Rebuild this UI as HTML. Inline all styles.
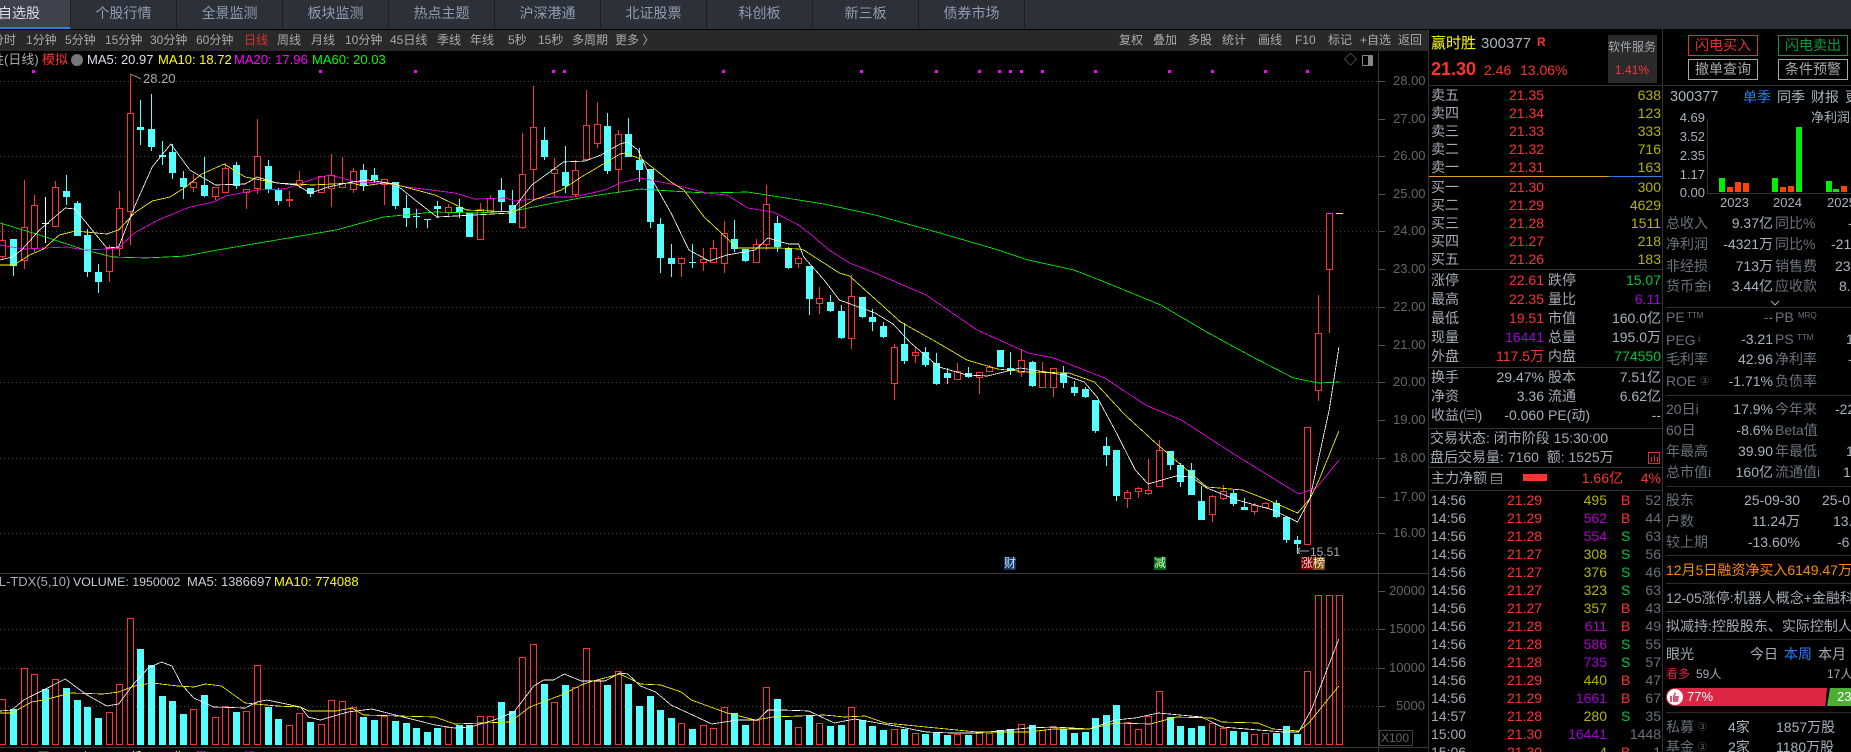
<!DOCTYPE html>
<html lang="zh"><head><meta charset="utf-8"><title>赢时胜</title>
<style>
*{margin:0;padding:0;box-sizing:border-box}
html,body{width:1851px;height:752px;background:#000;overflow:hidden}
body{position:relative;font-family:"Liberation Sans","Noto Sans CJK SC",sans-serif;font-size:14px;color:#aab4c0}
.t{position:absolute;white-space:nowrap;line-height:18px}
.b{position:absolute;background:#2c2c2c}
#top{position:absolute;left:0;top:0;width:1851px;height:29px;background:#2c3039}
.tab{position:absolute;top:0;height:29px;line-height:27px;text-align:center;color:#8f9db0;border-right:1px solid #1c1e24}
#bar{position:absolute;left:0;top:30px;width:1428px;height:21px;background:#292929}
#bar span{position:absolute;top:0;line-height:21px;font-size:12px;color:#aaa;white-space:nowrap}
.ax{position:absolute;left:1393px;font-size:13px;line-height:16px;color:#666}
.s{font-size:13px}.x{font-size:12px}
.r{color:#ff3232}.g{color:#00c83c}.o{color:#b4b400}.p{color:#b400c8}.v{color:#a000d8}.w{color:#a8b2be}.l{color:#a4acb6}.d{color:#6a727c}.bl{color:#2a7df0}
.sm{font-size:8px;position:absolute;color:#6a727c;white-space:nowrap;line-height:10px}
svg{position:absolute;left:0;top:0}
</style></head><body>
<div id="top">
<div class="tab" style="left:0;width:71px;background:#3d424d;color:#d8dde6;text-align:left;text-indent:-2px;border-bottom:2px solid #2a7de1;height:29px">自选股</div>
<div class="tab" style="left:71px;width:106px">个股行情</div>
<div class="tab" style="left:177px;width:106px">全景监测</div>
<div class="tab" style="left:283px;width:106px">板块监测</div>
<div class="tab" style="left:389px;width:106px">热点主题</div>
<div class="tab" style="left:495px;width:106px">沪深港通</div>
<div class="tab" style="left:601px;width:106px">北证股票</div>
<div class="tab" style="left:707px;width:106px">科创板</div>
<div class="tab" style="left:813px;width:106px">新三板</div>
<div class="tab" style="left:919px;width:106px">债券市场</div>
</div>
<div id="bar">
<span style="left:-8px">分时</span><span style="left:26px">1分钟</span><span style="left:65px">5分钟</span><span style="left:105px">15分钟</span><span style="left:150px">30分钟</span><span style="left:196px">60分钟</span><span style="left:244px;color:#e03030">日线</span><span style="left:277px">周线</span><span style="left:311px">月线</span><span style="left:345px">10分钟</span><span style="left:390px">45日线</span><span style="left:437px">季线</span><span style="left:470px">年线</span><span style="left:508px">5秒</span><span style="left:538px">15秒</span><span style="left:572px">多周期</span><span style="left:615px">更多 〉</span>
<span style="left:1119px">复权</span><span style="left:1153px">叠加</span><span style="left:1188px">多股</span><span style="left:1222px">统计</span><span style="left:1258px">画线</span><span style="left:1295px">F10</span><span style="left:1328px">标记</span><span style="left:1360px">+自选</span><span style="left:1398px">返回</span>
</div>

<svg id="c" width="1851" height="752"></svg>

<div class="t s" style="left:-9px;top:51px;color:#aaa">胜(日线)</div>
<div class="t s r" style="left:42px;top:51px">模拟</div>
<div style="position:absolute;left:71px;top:54px;width:12px;height:12px;border-radius:6px;background:#777"></div>
<div class="t s" style="left:87px;top:51px;color:#dde">MA5: 20.97</div>
<div class="t s" style="left:158px;top:51px;color:#ff0">MA10: 18.72</div>
<div class="t s" style="left:234px;top:51px;color:#f0f">MA20: 17.96</div>
<div class="t s" style="left:312px;top:51px;color:#0f0">MA60: 20.03</div>
<div class="t s" style="left:143px;top:70px;color:#aaa">28.20</div>
<div class="t x" style="left:1310px;top:543px;color:#aaa">15.51</div>
<div class="t s" style="left:1344px;top:51px;color:#888">◇</div>
<div class="t x" style="left:1004px;top:557px;width:12px;height:13px;line-height:13px;background:#0f3a66;color:#cde">财</div>
<div class="t x" style="left:1154px;top:557px;width:12px;height:13px;line-height:13px;background:#0a6a10;color:#cfc">减</div>
<div class="t x" style="left:1301px;top:557px;width:12px;height:13px;line-height:13px;background:#700;color:#fcc">涨</div>
<div class="t x" style="left:1313px;top:557px;width:12px;height:13px;line-height:13px;background:#7a4a10;color:#fec">榜</div>
<div class="t s" style="left:-20px;top:573px;color:#aab">VOL-TDX(5,10)</div>
<div class="t" style="left:73px;top:573px;font-size:12.4px;color:#c8d0d8">VOLUME: 1950002</div>
<div class="t s" style="left:187px;top:573px;color:#c8d0d8">MA5: 1386697</div>
<div class="t s" style="left:274px;top:573px;color:#ff0">MA10: 774088</div>
<div class="t x" style="left:4px;top:748px;color:#aaa">12/09 开:9.97 高:9.98</div>
<div class="t x" style="left:130px;top:748px;color:#ff0">低:9.21 收:9.93</div>
<div class="t x" style="left:195px;top:748px;color:#f0f">量:11.87 额:9.09</div>

<div class="ax" style="top:73px">28.00</div><div class="ax" style="top:111px">27.00</div><div class="ax" style="top:148px">26.00</div><div class="ax" style="top:186px">25.00</div><div class="ax" style="top:223px">24.00</div><div class="ax" style="top:261px">23.00</div><div class="ax" style="top:299px">22.00</div><div class="ax" style="top:337px">21.00</div><div class="ax" style="top:374px">20.00</div><div class="ax" style="top:412px">19.00</div><div class="ax" style="top:450px">18.00</div><div class="ax" style="top:489px">17.00</div><div class="ax" style="top:525px">16.00</div>
<div class="ax" style="top:583px;left:1389px">20000</div><div class="ax" style="top:621px;left:1389px">15000</div><div class="ax" style="top:660px;left:1389px">10000</div><div class="ax" style="top:698px;left:1396px">5000</div>
<div class="ax" style="top:730px;left:1379px;width:34px;height:16px;border:1px solid #444;line-height:14px;font-size:12px;padding-left:1px">X100</div>

<div class="b" style="left:0;top:573px;width:1428px;height:1px;background:#3a3a3a"></div>
<div class="b" style="left:0;top:747px;width:1428px;height:1px;background:#3a3a3a"></div>
<div class="b" style="left:1378px;top:51px;width:1px;height:701px;background:#3a3a3a"></div>
<div class="b" style="left:1428px;top:29px;width:1px;height:723px;background:#333"></div>
<div class="b" style="left:1662px;top:29px;width:1px;height:723px;background:#333"></div>

<!-- Column 1 -->
<div class="t" style="left:1431px;top:35px;font-size:15px;color:#ff0">赢时胜</div>
<div class="t" style="left:1481px;top:35px;font-size:15px;color:#aab4c0">300377</div>
<div class="t x r" style="left:1537px;top:33px;font-weight:bold">R</div>
<div class="t r" style="left:1431px;top:60px;font-size:18px;font-weight:bold">21.30</div>
<div class="t r" style="left:1484px;top:61px">2.46</div>
<div class="t r" style="left:1520px;top:61px">13.06%</div>
<div class="b" style="left:1608px;top:35px;width:49px;height:48px;background:#2a2a2a"></div>
<div class="t x" style="left:1608px;top:38px;color:#a0a8b0">软件服务</div>
<div class="t x r" style="left:1615px;top:61px">1.41%</div>
<div class="b" style="left:1429px;top:85px;width:233px;height:1px;background:#333"></div>

<div class="t l" style="left:1431px;top:86px">卖五</div><div class="t r" style="left:1509px;top:86px">21.35</div><div class="t o" style="right:190px;top:86px">638</div>
<div class="t l" style="left:1431px;top:104px">卖四</div><div class="t r" style="left:1509px;top:104px">21.34</div><div class="t o" style="right:190px;top:104px">123</div>
<div class="t l" style="left:1431px;top:122px">卖三</div><div class="t r" style="left:1509px;top:122px">21.33</div><div class="t o" style="right:190px;top:122px">333</div>
<div class="t l" style="left:1431px;top:140px">卖二</div><div class="t r" style="left:1509px;top:140px">21.32</div><div class="t o" style="right:190px;top:140px">716</div>
<div class="t l" style="left:1431px;top:158px">卖一</div><div class="t r" style="left:1509px;top:158px">21.31</div><div class="t o" style="right:190px;top:158px">163</div>
<div class="b" style="left:1429px;top:176px;width:180px;height:1px;background:#e09a20"></div>
<div class="b" style="left:1609px;top:176px;width:53px;height:1px;background:#2a7de1"></div>
<div class="t l" style="left:1431px;top:178px">买一</div><div class="t r" style="left:1509px;top:178px">21.30</div><div class="t o" style="right:190px;top:178px">300</div>
<div class="t l" style="left:1431px;top:196px">买二</div><div class="t r" style="left:1509px;top:196px">21.29</div><div class="t o" style="right:190px;top:196px">4629</div>
<div class="t l" style="left:1431px;top:214px">买三</div><div class="t r" style="left:1509px;top:214px">21.28</div><div class="t o" style="right:190px;top:214px">1511</div>
<div class="t l" style="left:1431px;top:232px">买四</div><div class="t r" style="left:1509px;top:232px">21.27</div><div class="t o" style="right:190px;top:232px">218</div>
<div class="t l" style="left:1431px;top:250px">买五</div><div class="t r" style="left:1509px;top:250px">21.26</div><div class="t o" style="right:190px;top:250px">183</div>
<div class="b" style="left:1429px;top:269px;width:233px;height:1px;background:#333"></div>

<div class="t l" style="left:1431px;top:271px">涨停</div><div class="t r" style="right:307px;top:271px">22.61</div><div class="t l" style="left:1548px;top:271px">跌停</div><div class="t g" style="right:190px;top:271px">15.07</div>
<div class="t l" style="left:1431px;top:290px">最高</div><div class="t r" style="right:307px;top:290px">22.35</div><div class="t l" style="left:1548px;top:290px">量比</div><div class="t v" style="right:190px;top:290px">6.11</div>
<div class="t l" style="left:1431px;top:309px">最低</div><div class="t r" style="right:307px;top:309px">19.51</div><div class="t l" style="left:1548px;top:309px">市值</div><div class="t w" style="right:190px;top:309px">160.0亿</div>
<div class="t l" style="left:1431px;top:328px">现量</div><div class="t v" style="right:307px;top:328px">16441</div><div class="t l" style="left:1548px;top:328px">总量</div><div class="t w" style="right:190px;top:328px">195.0万</div>
<div class="t l" style="left:1431px;top:347px">外盘</div><div class="t r" style="right:307px;top:347px">117.5万</div><div class="t l" style="left:1548px;top:347px">内盘</div><div class="t g" style="right:190px;top:347px">774550</div>
<div class="b" style="left:1429px;top:367px;width:233px;height:1px;background:#333"></div>
<div class="t l" style="left:1431px;top:368px">换手</div><div class="t w" style="right:307px;top:368px">29.47%</div><div class="t l" style="left:1548px;top:368px">股本</div><div class="t w" style="right:190px;top:368px">7.51亿</div>
<div class="t l" style="left:1431px;top:387px">净资</div><div class="t w" style="right:307px;top:387px">3.36</div><div class="t l" style="left:1548px;top:387px">流通</div><div class="t w" style="right:190px;top:387px">6.62亿</div>
<div class="t l" style="left:1431px;top:406px">收益(㈢)</div><div class="t w" style="right:307px;top:406px">-0.060</div><div class="t l" style="left:1548px;top:406px">PE(动)</div><div class="t w" style="right:190px;top:406px">--</div>
<div class="b" style="left:1429px;top:428px;width:233px;height:1px;background:#333"></div>
<div class="t l" style="left:1430px;top:429px">交易状态: 闭市阶段 15:30:00</div>
<div class="t l" style="left:1430px;top:448px">盘后交易量: 7160&nbsp; 额: 1525万</div>
<div style="position:absolute;left:1648px;top:452px;width:12px;height:12px;border:1px solid #d03030"></div>
<div class="b" style="left:1651px;top:457px;width:1px;height:5px;background:#d03030"></div><div class="b" style="left:1654px;top:455px;width:1px;height:7px;background:#d03030"></div><div class="b" style="left:1657px;top:457px;width:1px;height:5px;background:#d03030"></div>
<div class="b" style="left:1429px;top:467px;width:233px;height:1px;background:#333"></div>
<div class="t l" style="left:1431px;top:469px">主力净额</div>
<div style="position:absolute;left:1491px;top:473px;width:11px;height:11px;border:1px solid #777;background:repeating-linear-gradient(#777 0 1px,#000 1px 3px)"></div>
<div class="b" style="left:1523px;top:474px;width:24px;height:7px;background:#ff3232"></div>
<div class="t r" style="right:228px;top:469px">1.66亿</div><div class="t r" style="right:190px;top:469px">4%</div>
<div class="b" style="left:1429px;top:490px;width:233px;height:1px;background:#333"></div>

<div class="t l" style="left:1431px;top:491px">14:56</div><div class="t r" style="left:1507px;top:491px">21.29</div><div class="t o" style="right:244px;top:491px">495</div><div class="t r" style="left:1621px;top:491px">B</div><div class="t d" style="right:190px;top:491px">52</div>
<div class="t l" style="left:1431px;top:509px">14:56</div><div class="t r" style="left:1507px;top:509px">21.29</div><div class="t p" style="right:244px;top:509px">562</div><div class="t r" style="left:1621px;top:509px">B</div><div class="t d" style="right:190px;top:509px">44</div>
<div class="t l" style="left:1431px;top:527px">14:56</div><div class="t r" style="left:1507px;top:527px">21.28</div><div class="t p" style="right:244px;top:527px">554</div><div class="t g" style="left:1621px;top:527px">S</div><div class="t d" style="right:190px;top:527px">63</div>
<div class="t l" style="left:1431px;top:545px">14:56</div><div class="t r" style="left:1507px;top:545px">21.27</div><div class="t o" style="right:244px;top:545px">308</div><div class="t g" style="left:1621px;top:545px">S</div><div class="t d" style="right:190px;top:545px">56</div>
<div class="t l" style="left:1431px;top:563px">14:56</div><div class="t r" style="left:1507px;top:563px">21.27</div><div class="t o" style="right:244px;top:563px">376</div><div class="t g" style="left:1621px;top:563px">S</div><div class="t d" style="right:190px;top:563px">46</div>
<div class="t l" style="left:1431px;top:581px">14:56</div><div class="t r" style="left:1507px;top:581px">21.27</div><div class="t o" style="right:244px;top:581px">323</div><div class="t g" style="left:1621px;top:581px">S</div><div class="t d" style="right:190px;top:581px">63</div>
<div class="t l" style="left:1431px;top:599px">14:56</div><div class="t r" style="left:1507px;top:599px">21.27</div><div class="t o" style="right:244px;top:599px">357</div><div class="t r" style="left:1621px;top:599px">B</div><div class="t d" style="right:190px;top:599px">43</div>
<div class="t l" style="left:1431px;top:617px">14:56</div><div class="t r" style="left:1507px;top:617px">21.28</div><div class="t p" style="right:244px;top:617px">611</div><div class="t r" style="left:1621px;top:617px">B</div><div class="t d" style="right:190px;top:617px">49</div>
<div class="t l" style="left:1431px;top:635px">14:56</div><div class="t r" style="left:1507px;top:635px">21.28</div><div class="t p" style="right:244px;top:635px">586</div><div class="t g" style="left:1621px;top:635px">S</div><div class="t d" style="right:190px;top:635px">55</div>
<div class="t l" style="left:1431px;top:653px">14:56</div><div class="t r" style="left:1507px;top:653px">21.28</div><div class="t v" style="right:244px;top:653px">735</div><div class="t g" style="left:1621px;top:653px">S</div><div class="t d" style="right:190px;top:653px">57</div>
<div class="t l" style="left:1431px;top:671px">14:56</div><div class="t r" style="left:1507px;top:671px">21.29</div><div class="t o" style="right:244px;top:671px">440</div><div class="t r" style="left:1621px;top:671px">B</div><div class="t d" style="right:190px;top:671px">47</div>
<div class="t l" style="left:1431px;top:689px">14:56</div><div class="t r" style="left:1507px;top:689px">21.29</div><div class="t v" style="right:244px;top:689px">1661</div><div class="t r" style="left:1621px;top:689px">B</div><div class="t d" style="right:190px;top:689px">67</div>
<div class="t l" style="left:1431px;top:707px">14:57</div><div class="t r" style="left:1507px;top:707px">21.28</div><div class="t o" style="right:244px;top:707px">280</div><div class="t g" style="left:1621px;top:707px">S</div><div class="t d" style="right:190px;top:707px">35</div>
<div class="t l" style="left:1431px;top:725px">15:00</div><div class="t r" style="left:1507px;top:725px">21.30</div><div class="t v" style="right:244px;top:725px">16441</div><div class="t d" style="right:190px;top:725px">1448</div>
<div class="t l" style="left:1431px;top:743px">15:06</div><div class="t r" style="left:1507px;top:743px">21.30</div><div class="t o" style="right:244px;top:743px">4</div><div class="t r" style="left:1621px;top:743px">B</div><div class="t d" style="right:190px;top:743px">1</div>

<!-- Column 2 -->
<div class="t r" style="left:1688px;top:35px;width:70px;height:21px;line-height:19px;text-align:center;border:1px solid #e03030;color:#e03030">闪电买入</div>
<div class="t g" style="left:1778px;top:35px;width:70px;height:21px;line-height:19px;text-align:center;border:1px solid #00a040;color:#00a040">闪电卖出</div>
<div class="t" style="left:1688px;top:59px;width:70px;height:21px;line-height:19px;text-align:center;border:1px solid #aaa;color:#aaa">撤单查询</div>
<div class="t" style="left:1778px;top:59px;width:70px;height:21px;line-height:19px;text-align:center;border:1px solid #aaa;color:#aaa">条件预警</div>
<div class="b" style="left:1664px;top:85px;width:187px;height:1px;background:#333"></div>
<div class="t" style="left:1670px;top:88px;font-size:14.5px">300377</div>
<div class="t bl" style="left:1743px;top:88px">单季</div><div class="t" style="left:1777px;top:88px">同季</div><div class="t" style="left:1811px;top:88px">财报</div><div class="t" style="left:1845px;top:88px">更多</div>
<div class="t s w" style="right:146px;top:109px">4.69</div><div class="t s w" style="right:146px;top:128px">3.52</div><div class="t s w" style="right:146px;top:147px">2.35</div><div class="t s w" style="right:146px;top:166px">1.17</div><div class="t s w" style="right:146px;top:184px">0.00</div>
<div class="t s w" style="left:1811px;top:109px">净利润(亿)</div>
<div class="b" style="left:1707px;top:119px;width:1px;height:74px;background:#333"></div><div class="b" style="left:1707px;top:193px;width:144px;height:1px;background:#333"></div>
<div class="b" style="left:1719px;top:178px;width:6px;height:14px;background:#0e0"></div><div class="b" style="left:1727px;top:187px;width:6px;height:5px;background:#f40"></div><div class="b" style="left:1735px;top:182px;width:6px;height:10px;background:#f40"></div><div class="b" style="left:1743px;top:183px;width:6px;height:9px;background:#f40"></div>
<div class="b" style="left:1772px;top:178px;width:6px;height:14px;background:#0e0"></div><div class="b" style="left:1780px;top:187px;width:6px;height:5px;background:#f40"></div><div class="b" style="left:1788px;top:186px;width:6px;height:6px;background:#f40"></div><div class="b" style="left:1796px;top:127px;width:6px;height:65px;background:#0e0"></div>
<div class="b" style="left:1826px;top:181px;width:6px;height:11px;background:#0e0"></div><div class="b" style="left:1833px;top:189px;width:6px;height:3px;background:#0e0"></div><div class="b" style="left:1841px;top:186px;width:6px;height:6px;background:#f40"></div>
<div class="t s w" style="left:1720px;top:194px">2023</div><div class="t s w" style="left:1773px;top:194px">2024</div><div class="t s w" style="left:1827px;top:194px">2025</div>

<div class="t d" style="left:1666px;top:214px">总收入</div><div class="t w" style="right:78px;top:214px">9.37亿</div><div class="t d" style="left:1775px;top:214px">同比%</div><div class="t w" style="left:1848px;top:214px">-</div>
<div class="t d" style="left:1666px;top:235px">净利润</div><div class="t w" style="right:78px;top:235px">-4321万</div><div class="t d" style="left:1775px;top:235px">同比%</div><div class="t w" style="left:1831px;top:235px">-21</div>
<div class="t d" style="left:1666px;top:257px">非经损</div><div class="t w" style="right:78px;top:257px">713万</div><div class="t d" style="left:1775px;top:257px">销售费</div><div class="t w" style="left:1835px;top:257px">23</div>
<div class="t d" style="left:1666px;top:277px">货币金i</div><div class="t w" style="right:78px;top:277px">3.44亿</div><div class="t d" style="left:1775px;top:277px">应收款</div><div class="t w" style="left:1839px;top:277px">8.</div>
<svg width="10" height="6" style="left:1770px;top:300px"><path d="M1 1l4 4 4-4" fill="none" stroke="#aaa"/></svg>
<div class="b" style="left:1666px;top:307px;width:185px;height:1px;background:#2c2c2c"></div>
<div class="t d" style="left:1666px;top:308px">PE</div><div class="sm" style="left:1687px;top:311px">TTM</div><div class="t d" style="right:78px;top:308px">--</div><div class="t d" style="left:1775px;top:308px">PB</div><div class="sm" style="left:1798px;top:311px">MRQ</div>
<div class="t d" style="left:1666px;top:330px">PEG<span style="font-size:9px;vertical-align:3px"> i</span></div><div class="t w" style="right:78px;top:330px">-3.21</div><div class="t d" style="left:1775px;top:330px">PS</div><div class="sm" style="left:1797px;top:333px">TTM</div><div class="t w" style="left:1846px;top:330px">1</div>
<div class="t d" style="left:1666px;top:350px">毛利率</div><div class="t w" style="right:78px;top:350px">42.96</div><div class="t d" style="left:1775px;top:350px">净利率</div><div class="t w" style="left:1848px;top:350px">-</div>
<div class="t d" style="left:1666px;top:372px">ROE <span style="font-size:9px;vertical-align:2px">③</span></div><div class="t w" style="right:78px;top:372px">-1.71%</div><div class="t d" style="left:1775px;top:372px">负债率</div>
<div class="b" style="left:1666px;top:395px;width:185px;height:1px;background:#2c2c2c"></div>
<div class="t d" style="left:1666px;top:400px">20日i</div><div class="t w" style="right:78px;top:400px">17.9%</div><div class="t d" style="left:1775px;top:400px">今年来</div><div class="t w" style="left:1835px;top:400px">-22</div>
<div class="t d" style="left:1666px;top:421px">60日</div><div class="t w" style="right:78px;top:421px">-8.6%</div><div class="t d" style="left:1775px;top:421px">Beta值</div>
<div class="t d" style="left:1666px;top:442px">年最高</div><div class="t w" style="right:78px;top:442px">39.90</div><div class="t d" style="left:1775px;top:442px">年最低</div><div class="t w" style="left:1846px;top:442px">1</div>
<div class="t d" style="left:1666px;top:463px">总市值i</div><div class="t w" style="right:78px;top:463px">160亿</div><div class="t d" style="left:1775px;top:463px">流通值i</div><div class="t w" style="left:1843px;top:463px">1</div>
<div class="b" style="left:1666px;top:486px;width:185px;height:1px;background:#2c2c2c"></div>
<div class="t d" style="left:1666px;top:491px">股东</div><div class="t w" style="right:51px;top:491px">25-09-30</div><div class="t w" style="left:1822px;top:491px">25-0</div>
<div class="t d" style="left:1666px;top:512px">户数</div><div class="t w" style="right:51px;top:512px">11.24万</div><div class="t w" style="left:1833px;top:512px">13.</div>
<div class="t d" style="left:1666px;top:533px">较上期</div><div class="t w" style="right:51px;top:533px">-13.60%</div><div class="t w" style="left:1837px;top:533px">-6</div>
<div class="b" style="left:1666px;top:555px;width:185px;height:1px;background:#2c2c2c"></div>
<div class="t" style="left:1666px;top:561px;color:#ff8a00">12月5日融资净买入6149.47万</div>
<div class="b" style="left:1666px;top:583px;width:185px;height:1px;background:#2c2c2c"></div>
<div class="t l" style="left:1666px;top:589px">12-05涨停:机器人概念+金融科技</div>
<div class="b" style="left:1666px;top:611px;width:185px;height:1px;background:#2c2c2c"></div>
<div class="t l" style="left:1666px;top:617px">拟减持:控股股东、实际控制人</div>
<div class="b" style="left:1666px;top:639px;width:185px;height:1px;background:#2c2c2c"></div>
<div class="t l" style="left:1666px;top:645px">眼光</div><div class="t l" style="left:1750px;top:645px">今日</div><div class="t bl" style="left:1784px;top:645px">本周</div><div class="t l" style="left:1818px;top:645px">本月</div>
<div class="t x" style="left:1666px;top:665px;color:#d8243f">看多</div><div class="t x l" style="left:1696px;top:665px">59人</div><div class="t x l" style="left:1827px;top:665px">17人</div>
<div class="b" style="left:1666px;top:688px;width:161px;height:18px;background:#dd2544;border-radius:9px 0 0 9px;clip-path:polygon(0 0,100% 0,99% 100%,0 100%)"></div>
<div class="b" style="left:1827px;top:688px;width:24px;height:18px;background:#4caf33;clip-path:polygon(3px 0,100% 0,100% 100%,0 100%)"></div>
<div style="position:absolute;left:1667px;top:689px;width:16px;height:16px;border-radius:8px;background:#fff"></div>
<svg width="10" height="10" style="left:1670px;top:692px"><path d="M0 4h2v6H0zM3 4l2-4 1 1-1 3h4l-1 6H3z" fill="#dd5570"/></svg>
<div class="t s" style="left:1687px;top:688px;color:#fff">77%</div><div class="t s" style="left:1837px;top:688px;color:#fff">23</div>
<div class="b" style="left:1666px;top:712px;width:185px;height:1px;background:#2c2c2c"></div>
<div class="t d" style="left:1666px;top:718px">私募 <span style="font-size:9px;vertical-align:2px">③</span></div><div class="t w" style="left:1728px;top:718px">4家</div><div class="t w" style="left:1776px;top:718px">1857万股</div>
<div class="t d" style="left:1666px;top:738px">基金 <span style="font-size:9px;vertical-align:2px">③</span></div><div class="t w" style="left:1728px;top:738px">2家</div><div class="t w" style="left:1776px;top:738px">1180万股</div>

<script>
var C=[[240,256,223,260,1],[239,266,239,276,0],[227,260,180,269,1],[205,248,195,252,1],[223,223,197,243,2],[187,226,181,226,1],[191,197,175,205,0],[203,236,201,236,0],[235,272,229,277,0],[272,282,264,293,0],[248,271,245,282,1],[208,248,191,256,1],[113,211,74,245,1],[127,130,100,145,0],[129,147,94,151,0],[155,157,141,165,0],[152,173,144,179,0],[178,187,171,199,0],[182,187,174,192,1],[185,196,157,197,0],[187,196,187,200,1],[168,192,163,192,1],[165,186,162,189,0],[189,192,189,209,1],[156,188,119,194,1],[166,189,160,193,0],[190,201,188,205,0],[199,200,191,207,1],[180,185,171,188,1],[188,194,188,197,0],[176,192,176,192,1],[175,188,154,207,1],[183,187,157,187,1],[171,189,168,193,1],[170,186,164,191,0],[175,180,168,183,0],[179,184,179,205,1],[182,206,182,209,0],[208,218,195,227,0],[216,217,209,228,0],[219,220,219,228,0],[206,209,201,218,0],[207,212,204,216,1],[207,212,199,218,0],[213,237,213,237,0],[209,239,203,239,1],[198,212,195,212,1],[190,202,178,212,0],[205,223,190,223,0],[174,227,133,229,1],[127,169,86,200,1],[140,157,127,160,0],[169,173,158,197,1],[172,186,146,193,0],[170,194,160,197,1],[125,159,90,160,1],[124,143,102,148,1],[126,171,113,174,0],[134,169,130,193,1],[134,157,118,157,0],[160,170,148,182,0],[169,222,169,228,0],[224,258,218,273,0],[258,264,244,277,0],[258,263,257,277,1],[262,263,244,268,0],[259,262,248,271,1],[248,262,240,262,1],[233,263,221,273,1],[239,249,220,252,0],[249,261,249,262,0],[244,262,239,263,1],[204,244,185,250,1],[223,247,216,252,0],[248,268,247,269,0],[258,263,256,268,1],[266,299,266,315,0],[298,303,287,314,1],[302,311,295,312,0],[311,338,305,339,0],[296,338,275,349,1],[297,317,297,318,0],[317,322,309,331,0],[326,337,322,338,0],[347,383,344,400,1],[344,361,323,364,0],[352,355,348,363,1],[352,365,347,367,0],[363,384,353,385,0],[373,378,368,384,0],[371,379,363,379,1],[373,377,367,378,0],[372,377,372,394,1],[367,371,365,371,1],[350,367,350,367,0],[368,371,352,375,0],[360,372,349,377,1],[362,386,361,387,0],[371,387,362,387,1],[368,387,368,397,1],[373,383,366,388,0],[387,393,381,396,0],[389,397,387,398,0],[400,431,400,433,0],[446,455,437,466,0],[450,496,450,501,0],[492,498,490,508,1],[488,491,487,498,1],[490,493,459,495,1],[450,486,440,487,1],[451,465,451,470,0],[465,482,463,487,0],[470,495,463,495,0],[501,520,486,520,0],[496,514,495,522,1],[491,498,485,500,1],[493,504,490,506,0],[507,510,498,510,0],[505,511,503,515,1],[503,507,502,508,1],[503,517,500,518,0],[517,540,516,543,0],[540,544,536,554,0],[427,544,427,544,1],[333,390,295,401,1],[213,269,213,333,1]];
var V=[699,709,668,674,689,679,688,700,707,718,712,684,618,649,665,696,701,714,709,695,717,706,712,711,665,707,719,725,713,722,724,700,701,707,717,720,716,721,723,728,732,728,727,725,725,716,716,702,711,657,644,684,702,685,687,648,680,685,671,684,706,696,710,718,723,729,725,728,707,713,725,720,687,699,720,727,715,723,726,725,707,720,726,730,729,729,733,734,732,735,734,735,733,733,730,729,724,725,730,727,729,733,732,718,715,705,722,729,716,691,717,726,728,726,723,728,731,732,734,733,733,726,734,671,595,595,595];
var VR=[1,0,1,1,0,1,0,0,0,0,1,1,1,0,0,0,0,0,1,0,1,1,0,1,1,0,0,1,1,0,1,1,1,1,0,0,1,0,0,0,0,0,1,0,0,1,1,0,0,1,1,0,1,0,1,1,1,0,1,0,0,0,0,0,1,0,1,1,1,0,0,1,1,0,0,1,0,1,0,0,1,0,0,0,1,0,1,0,0,0,1,0,1,1,0,0,1,0,1,1,0,0,0,0,0,0,1,1,1,1,0,0,0,0,1,1,0,0,1,1,0,0,0,1,1,1,1];
function A(a){var o=[];for(var i=0;i<a.length;i+=2)o.push((a[i]/2.529).toFixed(1)+','+a[i+1]);return o}
function B(a){var o=[];for(var i=0;i<a.length;i+=2)o.push((620+a[i]/1.96).toFixed(1)+','+a[i+1]);return o}
function L(p,c){return '<polyline points="'+p.join(' ')+'" fill="none" stroke="'+c+'" stroke-width="0.8"/>'}
var h='<g shape-rendering="crispEdges">';
[81,156,231,307,382,458,533,629,668,706].forEach(function(y){h+='<line x1="0" x2="1378" y1="'+(y+.5)+'" y2="'+(y+.5)+'" stroke="#444" stroke-dasharray="1 3"/>'});
[81,119,156,194,231,269,307,345,382,420,458,497,533,591,629,668,706].forEach(function(y){h+='<line x1="1379" x2="1385" y1="'+(y+.5)+'" y2="'+(y+.5)+'" stroke="#555"/>'});
[32,319,414,552,563,722,860,935,978,998,1009,1020,1041,1094,1168,1211,1264,1306].forEach(function(x){h+='<rect x="'+x+'" y="70" width="3" height="3" fill="#f0f"/>'});
C.forEach(function(c,k){var x=Math.round(2.4+10.61*k),col=c[4]==1?'#ff3232':c[4]==2?'#fff':'#54ffff',t=c[0],b=c[1];
 h+='<rect x="'+x+'" y="'+c[2]+'" width="1" height="'+Math.max(c[3]-c[2],1)+'" fill="'+col+'"/>';
 if(c[4]==1){h+='<rect x="'+(x-2.5)+'" y="'+(t+.5)+'" width="6" height="'+Math.max(b-t,1)+'" fill="#000" stroke="'+col+'"/>'}
 else{h+='<rect x="'+(x-3)+'" y="'+t+'" width="7" height="'+Math.max(b-t,1)+'" fill="'+col+'"/>'}
});
h+='<rect x="1336" y="213" width="7" height="1" fill="#ff0"/>';
V.forEach(function(y,k){var x=Math.round(2.4+10.61*k);
 if(VR[k])h+='<rect x="'+(x-2.5)+'" y="'+(y+.5)+'" width="6" height="'+(745-y-1)+'" fill="#000" stroke="#ff3232"/>';
 else h+='<rect x="'+(x-3)+'" y="'+y+'" width="7" height="'+(745-y)+'" fill="#54ffff"/>';
});
h+=L(A([0,223,100,235,215,250,285,257,370,258,470,256,550,250,700,240,850,230,970,217,1100,212,1200,213,1300,211,1400,203,1480,197,1568,192]).concat(B([40,189,100,191,170,193,250,192,300,196,400,204,500,215,620,232,735,249,800,260,890,270,950,282,1060,305,1150,332,1240,357,1320,378,1370,383,1409,382])),'#0f0');
h+=L(A([0,245,60,249,170,247,215,250,270,249,300,248,340,233,400,220,480,207,540,202,570,196,650,190,720,189,800,178,835,175,900,182,970,183,1030,187,1150,193,1200,199,1280,198,1300,201,1400,197,1450,197,1530,190,1568,183]).concat(B([40,178,100,184,170,193,210,195,250,208,300,212,350,225,375,235,410,250,450,263,500,273,600,295,700,330,800,353,850,358,950,378,1030,405,1100,420,1200,453,1330,494,1365,488,1409,460])),'#f0f');
h+=L(A([0,265,35,265,75,255,110,249,150,235,190,231,270,234,300,230,340,213,385,201,430,197,470,187,510,174,567,164,620,177,700,183,790,185,890,183,920,186,970,183,1005,185,1100,195,1180,210,1300,212,1350,200,1420,190,1470,177,1530,163,1568,154]).concat(B([10,153,45,160,100,182,125,190,165,217,230,248,310,248,350,249,360,250,430,273,450,276,550,322,620,342,680,360,740,369,800,372,880,373,930,382,990,415,1050,443,1100,465,1150,487,1220,490,1270,500,1328,513,1352,499,1370,480,1409,431])),'#ff0');
h+=L(A([0,260,30,257,55,250,100,230,165,208,190,209,270,248,300,247,340,207,385,167,432,144,480,170,545,185,620,184,650,177,700,183,750,185,785,193,830,187,890,182,930,180,1000,184,1050,200,1105,217,1200,215,1290,213,1345,185,1425,162,1480,161,1520,155,1568,144]).concat(B([15,142,35,150,60,177,100,213,135,250,175,261,210,255,265,250,290,238,330,244,350,244,360,257,400,280,430,300,500,313,535,324,570,343,625,367,680,375,720,376,785,368,870,375,910,382,935,397,970,430,1010,470,1035,484,1090,476,1120,477,1150,488,1210,500,1280,510,1328,522,1352,499,1390,410,1409,347])),'#fff');
h+=L(A([0,711,30,710,60,700,110,690,165,679,220,695,270,706,300,704,340,683,375,668,408,662,435,666,460,685,490,698,540,707,620,708,650,702,675,700,760,707,780,717,810,720,880,712,940,709,1000,715,1100,725,1150,728,1190,727,1250,720,1300,712,1350,686,1375,680,1400,680,1427,674,1470,681,1530,681,1568,673]).concat(B([15,674,40,686,70,692,100,705,180,724,230,720,270,720,290,710,320,710,370,711,420,723,460,719,550,727,600,732,650,733,700,733,800,728,850,727,920,729,970,720,1010,718,1055,713,1140,717,1180,727,1300,732,1330,732,1355,710,1409,639])),'#fff');
h+=L(A([0,713,30,713,80,702,110,700,180,693,260,694,300,692,340,686,385,683,450,686,490,687,520,684,560,686,620,703,700,706,760,707,780,711,850,711,890,708,920,715,1100,717,1150,724,1290,722,1340,707,1420,695,1470,685,1500,681,1568,674]).concat(B([40,684,80,685,120,692,140,700,210,713,265,720,300,717,400,715,440,717,480,716,520,723,600,727,700,732,800,732,850,729,920,729,970,723,1040,724,1090,717,1160,718,1180,722,1250,723,1280,729,1330,731,1350,723,1409,686])),'#ff0');
h+=L(['130,74','135,76','141,79'],'#aaa')+L(['1297,551','1309,551'],'#aaa')+L(['1300,548','1297,551','1300,554'],'#aaa');
h+='<rect x="1362.5" y="55.5" width="10" height="10" rx="1" fill="none" stroke="#888"/><rect x="1368" y="56" width="4" height="9" fill="#888"/>';
h+='</g>';
document.getElementById('c').innerHTML=h;
</script>
</body></html>
